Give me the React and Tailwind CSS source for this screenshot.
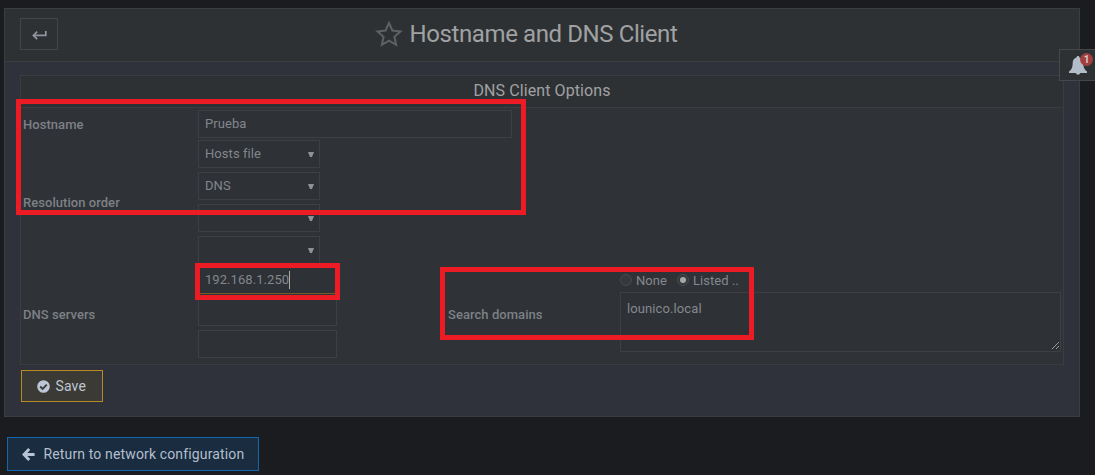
import React from "react";

const field = "h-7 border border-[#3d3f44] bg-[#2e3135] pl-1.5 text-[13px] leading-[26px] tracking-[0.06px] text-[#82868d]";
const label = "shrink-0 text-[13px] font-medium leading-4 tracking-[0.05px] text-[#7d8187]";

function Select({ value }) {
  return (
    <div className={`${field} flex w-[122px] items-center justify-between pr-[5px]`}>
      <span>{value}</span>
      <svg width="6" height="6" viewBox="0 0 6 6" className="mt-[2px] fill-[#929294]">
        <path d="M0 0h6L4 5H2z" />
      </svg>
    </div>
  );
}

function Radio({ checked, children }) {
  return (
    <div className="flex items-center gap-1">
      <span className="flex size-3 items-center justify-center rounded-full border border-[#494b50] bg-[#36393c]">
        {checked && <span className="size-1.5 rounded-full bg-[#a8a8a8]" />}
      </span>
      <span className="pt-px">{children}</span>
    </div>
  );
}

export default function App() {
  return (
    <div className="relative h-[475px] w-[1095px] overflow-hidden bg-[#1b1c20] pl-1 pt-2 font-[Roboto,sans-serif]">
      <main className="flex h-[409px] w-[1076px] flex-col border border-[#3b3d41] bg-[#2f323b]">
        <header className="grid h-[53px] shrink-0 grid-cols-[1fr_auto_1fr] items-center border-b border-[#3b3d41] bg-[#2e3134] pl-[15px] pr-[47px]">
          <button className="mb-[3px] flex h-8 w-[38px] items-center justify-center border border-[#434549] pt-[3px]">
            <svg width="15" height="9" viewBox="0 0 15 9" fill="none" stroke="#9295a0" strokeWidth="1.7">
              <path d="M13.8 0v4.4H2" />
              <path d="M5.2 .7 1.4 4.4l3.8 3.7" />
            </svg>
          </button>
          <h1 className="mb-[2px] flex items-center gap-[7px] text-2xl leading-8 text-[#a0a1a3]">
            <svg width="28" height="26" viewBox="0 0 28 26" fill="none" stroke="#5e6064" strokeWidth="2">
              <path d="m14 2 3.4 7.5 8.1.9-6.1 5.4 1.7 8L14 19.7l-7.1 4.1 1.7-8-6.1-5.4 8.1-.9z" />
            </svg>
            <span className="tracking-[-0.4px]">Hostname and DNS Client</span>
          </h1>
        </header>

        <section className="ml-[15px] mt-[13px] flex h-[290px] w-[1044px] shrink-0 flex-col border border-[#3b3d41] bg-[#2f3236]">
          <h2 className="h-8 shrink-0 border-b border-[#3b3d41] bg-[#2e3134] text-center text-base leading-[29px] tracking-[0.09px] text-[#a0a1a3]">
            DNS Client Options
          </h2>
          <div className="flex h-[31px] shrink-0 items-center pl-0.5 pt-px">
            <div className={`${label} w-[175px] pt-0.5`}>Hostname</div>
            <div className={`${field} w-[314px]`}>Prueba</div>
          </div>
          <div className="flex h-[126px] shrink-0 items-center pl-0.5">
            <div className={`${label} w-[175px] pt-0.5`}>Resolution order</div>
            <div className="flex flex-col gap-1">
              <Select value="Hosts file" />
              <Select value="DNS" />
              <Select value="" />
              <Select value="" />
            </div>
          </div>
          <div className="flex h-[99px] shrink-0 items-center pl-0.5">
            <div className={`${label} w-[175px]`}>DNS servers</div>
            <div className="mt-[-5px] flex w-[250px] flex-col gap-1">
              <div className={`${field} flex w-[139px] items-center border-b-[#745d26]`}>
                <span>192.168.1.250</span>
                <span className="h-[18px] w-px bg-[#aaabad]" />
              </div>
              <div className={`${field} w-[139px]`} />
              <div className={`${field} w-[139px]`} />
            </div>
            <div className={`${label} w-[172px]`}>Search domains</div>
            <div className="self-start pt-[7px]">
              <div className="flex h-5 items-start gap-[10px] text-[13px] leading-[15px] tracking-[0.05px] text-[#85898f]">
                <Radio>None</Radio>
                <Radio checked>Listed ..</Radio>
              </div>
              <div className="flex h-[60px] w-[441px] items-end justify-between border border-[#3d3f44] bg-[#2e3135] pl-1.5 text-[13px] tracking-[0.1px] text-[#85898f]">
                <span className="self-start pt-2 leading-4">lounico.local</span>
                <svg width="9" height="9" viewBox="0 0 9 9" className="mb-px" stroke="#bdbdbd" strokeWidth="1">
                  <path d="m1 8 7-7M5 8l3-3" strokeDasharray="1.1 .4" />
                </svg>
              </div>
            </div>
          </div>
        </section>

        <button className="ml-4 mt-[5px] flex h-8 w-[82px] shrink-0 items-center gap-1.5 border border-[#b88a24] bg-[#3c3a35] pl-[14.5px] text-sm tracking-[0.12px] text-[#bdc6d2]">
          <svg width="13" height="13" viewBox="0 0 13 13">
            <circle cx="6.5" cy="6.5" r="6.3" fill="#bdc6d7" />
            <path d="m3.2 6.5 2.4 2.4 4.2-4.2" fill="none" stroke="#3c3a35" strokeWidth="1.9" />
          </svg>
          Save
        </button>
      </main>

      <button className="ml-[3px] mt-5 flex h-[34px] w-[252px] items-center gap-[9px] border border-[#1266ad] bg-[#1a2c3f] pl-[13.5px] text-sm tracking-[0.14px] text-[#b3bfcd]">
        <svg width="13" height="13" viewBox="0 0 13 13" fill="none" stroke="#b7c4d8" strokeWidth="2.8">
          <path d="M7.2 1.1 1.9 6.5l5.3 5.4M2.4 6.5h10.2" />
        </svg>
        Return to network configuration
      </button>

      {/* notification tab pinned to the right edge */}
      <div className="absolute right-0 top-[49px] h-8 w-9 border border-r-0 border-[#45474b] bg-[#2e3134]">
        <svg width="18" height="20" viewBox="0 0 18 20" className="absolute left-[9px] top-1.5 fill-[#b2bdc9]">
          <path d="M9 0c-.9 0-1.4.6-1.4 1.4C5 2 3.700 4.100 3.700 7c0 4.200-.9 6.500-3.700 8.400V17h6.700a2.400 2.400 0 0 0 4.600 0H18v-1.600c-2.800-1.900-3.700-4.200-3.700-8.400 0-2.900-1.300-5-3.900-5.600C10.400.6 9.900 0 9 0z" />
        </svg>
        <span className="absolute left-5 top-[3px] flex size-[13px] items-center justify-center rounded-full bg-[#a33e3e] text-[10px] font-bold leading-none text-[#d8cccc]">
          1
        </span>
      </div>

      {/* annotation outlines */}
      <div className="absolute left-4 top-[99px] h-[116px] w-[510px] border-[5px] border-[#ed1c24]" />
      <div className="absolute left-[195px] top-[263px] h-[37px] w-[145px] border-[5px] border-[#ed1c24]" />
      <div className="absolute left-[440px] top-[267px] h-[73px] w-[314px] border-[5px] border-[#ed1c24]" />
    </div>
  );
}
